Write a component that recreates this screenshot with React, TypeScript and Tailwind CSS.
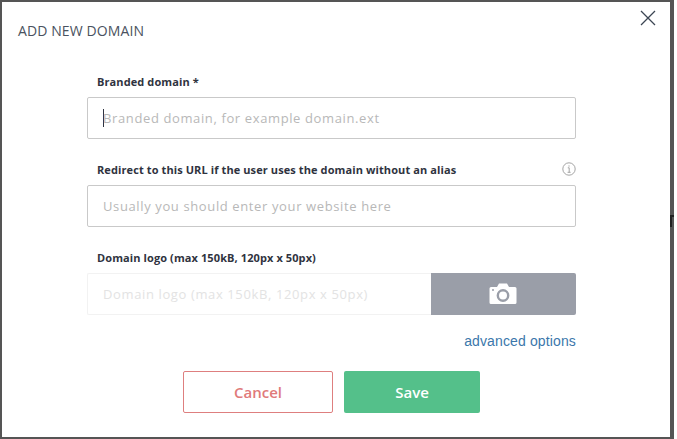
import React from "react";

function Label({ children }: { children: React.ReactNode }) {
  return <label className="block pl-[10px] h-[16px] text-[11px] leading-[16px] font-bold tracking-[0.1px] text-[#2f3340]">{children}</label>;
}

export default function App() {
  return (
    <div className="w-[677px] h-[439px] bg-white overflow-hidden font-['Open_Sans',sans-serif]">
      <div className="relative w-[674px] h-[439px] bg-white border-t-2 border-b-2 border-l-2 border-r-[4px] border-[#555555]">
        {/* bit of the page behind the dialog showing on the right edge */}
        <span className="absolute top-[213px] right-[-2px] w-[2px] h-[12px] bg-[#222222]" />
        <span className="absolute top-[213px] right-[-4px] w-[4px] h-[2px] bg-[#222222]" />

        <button type="button" className="absolute top-[7px] right-[13px] text-[#3c4653]" aria-label="Close">
          <svg width="18" height="18" viewBox="0 0 18 18" fill="none" stroke="currentColor" strokeWidth="1.3">
            <path d="M2 2 L16 16 M16 2 L2 16" />
          </svg>
        </button>

        <h2 className="pl-[16px] pt-[19px] h-[60px] text-[14px] leading-[20px] tracking-[0.1px] font-normal text-[#4a5260]">ADD NEW DOMAIN</h2>

        <form className="ml-[85px] w-[489px]">
          <div className="pt-[12px]">
            <Label>Branded domain *</Label>
            <div className="mt-[7px] h-[42px] flex items-center pl-[15px] pt-[2px] rounded-[2px] border border-[#c9c9c9] text-[13px] tracking-[0.62px] text-[#b8b8b8]">
              <span className="w-px h-[18px] -mr-px -mt-[2px] bg-[#2f3340]" />
              Branded domain, for example domain.ext
            </div>
          </div>

          <div className="mt-[23px]">
            <div className="relative">
              <Label>Redirect to this URL if the user uses the domain without an alias</Label>
              <svg className="absolute right-0 top-0 text-[#9a9a9a]" width="14" height="14" viewBox="0 0 14 14" fill="none" stroke="currentColor">
                <circle cx="7" cy="7" r="6.2" strokeWidth="0.9" />
                <path d="M5.8 5.8 H7.2 V10.3 M5.6 10.3 H8.6" strokeWidth="0.9" />
                <path d="M7 3.4 V4.5" strokeWidth="1.1" />
              </svg>
            </div>
            <div className="mt-[7px] h-[42px] flex items-center pl-[15px] pt-[2px] rounded-[2px] border border-[#c9c9c9] text-[13px] tracking-[0.62px] text-[#b8b8b8]">
              Usually you should enter your website here
            </div>
          </div>

          <div className="mt-[23px]">
            <Label>Domain logo (max 150kB, 120px x 50px)</Label>
            <div className="mt-[7px] h-[42px] flex">
              <div className="flex-1 flex items-center pl-[15px] pt-[2px] rounded-l-[2px] border border-r-0 border-[#f2f2f2] text-[13px] tracking-[0.62px] text-[#e3e3e3]">
                Domain logo (max 150kB, 120px x 50px)
              </div>
              <div className="w-[145px] flex items-center justify-center rounded-r-[2px] bg-[#9a9ea8]">
                <svg className="-ml-[1px]" width="28" height="22" viewBox="0 0 28 22">
                  <path fill="#ffffff" d="M2 4 H8 L10 0.5 H18 L20 4 H26 Q27.5 4 27.5 5.5 V19.5 Q27.5 21 26 21 H2 Q0.5 21 0.5 19.5 V5.5 Q0.5 4 2 4 Z" />
                  <circle cx="14" cy="12.5" r="5.2" fill="none" stroke="#9a9ea8" strokeWidth="2.4" />
                  <circle cx="4" cy="7" r="1" fill="#9a9ea8" />
                </svg>
              </div>
            </div>
          </div>

          <div className="mt-[16px] text-right font-['Liberation_Sans',sans-serif] text-[14px] leading-[20px] tracking-[0.13px] text-[#3b77ab]">
            advanced options
          </div>

          <div className="mt-[20px] ml-[96px] flex gap-[11px]">
            <button type="button" className="w-[150px] h-[42px] rounded-[2px] border border-[#de7f7f] bg-white text-[15px] font-semibold text-[#e07a7a]">Cancel</button>
            <button type="button" className="w-[136px] h-[42px] rounded-[2px] bg-[#54c08a] text-[15px] font-semibold text-white">Save</button>
          </div>
        </form>
      </div>
    </div>
  );
}
